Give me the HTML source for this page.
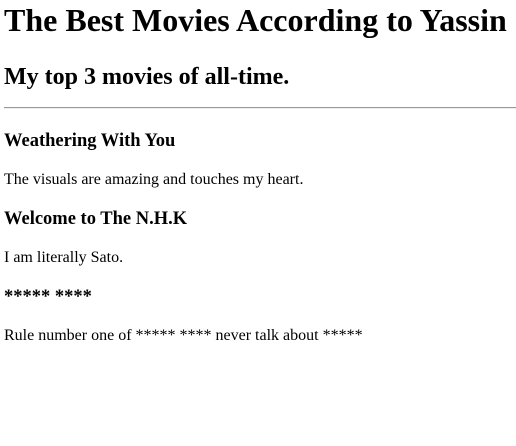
<!DOCTYPE html>
<html><head><meta charset="utf-8"><style>
html,body{background:#fff;}
body{margin:0 4px;padding-top:2px;font-family:"Liberation Serif",serif;color:#000;font-size:16px;}
h1{font-size:32px;margin:0;}
h2{font-size:24px;margin:25px 0 0;}
hr{margin:16px -4px 0 0;border:0;border-top:1px solid #9a9a9a;border-bottom:1px solid #eee;}
h4{font-size:18.5px;margin:20px 0 19px;}
hr + h4{margin-top:22px;}
p{margin:16px 0;font-size:16px;}
</style></head><body>
<h1>The Best Movies According to Yassin</h1>
<h2>My top 3 movies of all-time.</h2>
<hr>
<h4>Weathering With You</h4>
<p>The visuals are amazing and touches my heart.</p>
<h4>Welcome to The N.H.K</h4>
<p>I am literally Sato.</p>
<h4>***** ****</h4>
<p>Rule number one of ***** **** never talk about *****</p>
</body></html>
